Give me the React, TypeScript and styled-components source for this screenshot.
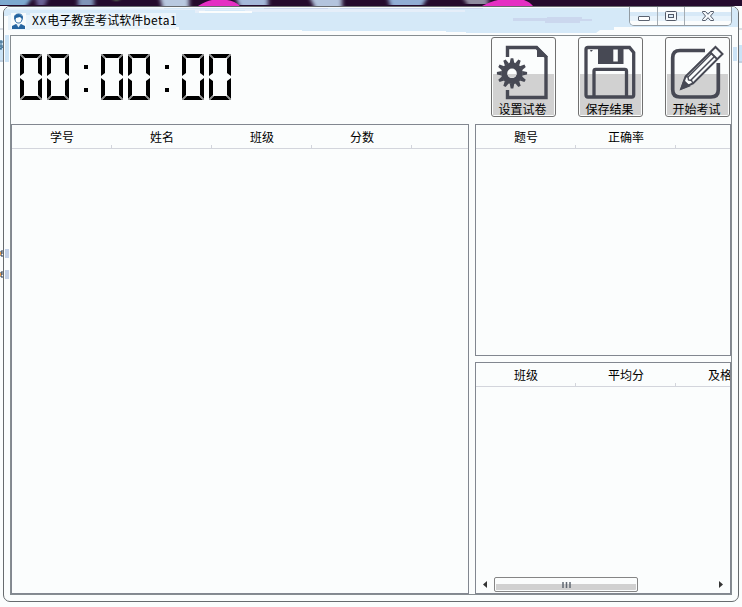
import React from 'react';
import styled, { createGlobalStyle } from 'styled-components';

const Global = createGlobalStyle`
  * { box-sizing: border-box; }
  html, body { margin: 0; background: #fbfdfd; overflow: hidden; }
  body { font: 12px/16px "Noto Sans CJK SC", sans-serif; color: #000; }
  svg { display: block; }
`;

const Desktop = styled.main`
  position: relative;
  width: 742px;
  height: 607px;
  padding: 6px 3px 5px;
  overflow: hidden;
  background: #fbfdfd;
`;

const Backdrop = styled.svg`
  position: absolute;
  inset: 0;
`;

const Window = styled.section`
  position: relative;
  width: 736px;
  height: 596px;
  border: 1px solid #676b6e;
  border-radius: 7px;
  background: #fbfdfd;
  padding: 0 6px;
  overflow: hidden;
`;

const Glass = styled.svg`
  position: absolute;
  left: 0;
  top: 0;
`;

const TitleBar = styled.header`
  position: relative;
  height: 28px;
  display: flex;
  align-items: flex-start;
`;

const UserMark = styled.svg`
  margin: 6px 6px 0 1px;
`;

const Title = styled.h1`
  margin: 5px auto 0 0;
  font: 12px/16px "Noto Sans CJK SC", sans-serif;
  white-space: nowrap;
`;

const TitleLatin = styled.span<{ $gap: number }>`
  letter-spacing: ${p => p.$gap}px;
`;

const Controls = styled.div`
  display: flex;
  width: 103px;
  height: 19px;
  border: 1px solid #929ba2;
  border-top: 0;
  border-radius: 0 0 5px 5px;
  overflow: hidden;
`;

const ControlButton = styled.button<{ $width: number }>`
  width: ${p => p.$width}px;
  height: 18px;
  padding: 0;
  border: 0;
  border-right: 1px solid #a5adb3;
  background: linear-gradient(#fbfdfd 0 5px, #d7e9f7 5px 9px, #e8f3fb 9px 14px, #fbfdfd 14px);
  &:last-child { border-right: 0; }
`;

const Client = styled.div`
  position: relative;
  width: 722px;
  height: 560px;
  border: 1px solid #868d91;
  background: #fbfdfd;
`;

const Toolbar = styled.div`
  height: 88px;
  display: flex;
  align-items: flex-start;
  justify-content: space-between;
  padding: 1px 1px 0 8px;
`;

const Clock = styled.div`
  display: flex;
  padding-top: 17px;
`;

const ClockGlyph = styled.svg<{ $before: number }>`
  margin-left: ${p => p.$before}px;
`;

const Actions = styled.div`
  display: flex;
  gap: 22px;
`;

const Action = styled.button`
  position: relative;
  width: 65px;
  height: 80px;
  border: 1px solid #707070;
  border-radius: 3px;
  padding: 0;
  font: inherit;
  color: #000;
  background: linear-gradient(#d1d1d1, #d1d1d1) 1px 36px / 61px 41px no-repeat, #fbfdfd;
`;

const ActionIcon = styled.svg`
  margin: -1px;
`;

const ActionLabel = styled.span`
  position: absolute;
  left: 0;
  right: 2px;
  bottom: -1px;
  line-height: 16px;
  text-align: center;
`;

const Panels = styled.div`
  display: flex;
  gap: 6px;
  height: 470px;
`;

const SideColumn = styled.div`
  display: flex;
  flex: none;
  flex-direction: column;
  gap: 6px;
  width: 256px;
`;

const Table = styled.section<{ $width: number; $height: number }>`
  display: flex;
  flex: none;
  flex-direction: column;
  width: ${p => p.$width}px;
  height: ${p => p.$height}px;
  border: 1px solid #828790;
  overflow: hidden;
`;

const HeaderRow = styled.div`
  display: flex;
  flex: none;
  height: 24px;
  border-bottom: 1px solid #d3d5dc;
  overflow: hidden;
`;

const HeaderCell = styled.div`
  flex: 0 0 100px;
  height: 23px;
  line-height: 24px;
  text-align: center;
  white-space: nowrap;
  background: linear-gradient(#d3d5dc, #d3d5dc) right bottom / 1px 3px no-repeat;
`;

const ScrollBar = styled.div`
  display: flex;
  align-items: center;
  justify-content: space-between;
  height: 17px;
  margin-top: auto;
  padding: 0 6px;
`;

const Thumb = styled.div`
  display: flex;
  justify-content: center;
  align-items: center;
  width: 144px;
  height: 15px;
  margin-left: 6px;
  margin-right: auto;
  border: 1px solid #858585;
  border-radius: 2px;
  background: linear-gradient(#fbfdfd 0 6px, #d1d1d1 6px);
  box-shadow: inset 1px 0 #fbfdfd, inset -1px -1px #fbfdfd;
`;

function Surroundings() {
  return (
    <Backdrop width="742" height="607" viewBox="0 0 742 607">
      <defs>
        <filter id="soft" x="-10%" y="-50%" width="120%" height="200%">
          <feGaussianBlur stdDeviation="2 .7" />
        </filter>
      </defs>
      <rect width="742" height="6" fill="#250b2d" />
      <g filter="url(#soft)">
        <path d="M-4-2h36l-5 7H-4z" fill="#7da9cf" />
        <path d="M35-2h13l-3 7H37z" fill="#6a6295" />
        <path d="M78-2h16v7H78z" fill="#8094b9" />
        <path d="M112-2h10l-6 4z" fill="#587050" />
        <path d="M160-2h29v8h-27z" fill="#b9c9e0" />
        <path d="M236-2h32v7h-29z" fill="#a5b9da" />
        <path d="M310-2h32v8h-28z" fill="#b3c4dd" />
        <path d="M388-2h39l-4 7h-33z" fill="#91aed5" />
        <path d="M463-2h25v6h-21z" fill="#918da0" />
      </g>
      <path d="M198 6q8-5 14-6h15q8 1 13 6zM482 6q10-5 16-6h26q6 2 9 6z" fill="#e52fc3" />
      <path d="M0 40h3v22H0zM739 45h3v18h-3z" fill="#cce4f7" />
      <path d="M0 29h3M0 61h3M739 29h3M739 62h3" stroke="#b7bfcc" />
      <path d="M0 42h3M1 40v10M0 46h3M0 49l3-2" stroke="#32678c" />
      <g fill="none" stroke="#203148">
        <path d="M4 251H1v5h3M1 253h3M4 272H1v5h3M1 274h3" />
      </g>
      <path d="M0 252h1v3H0zM0 273h1v3H0z" fill="#e99a43" />
    </Backdrop>
  );
}

function FrameGlass() {
  return (
    <Glass width="734" height="594" viewBox="4 7 734 594">
      <path d="M4 7h734v20H614v3h-14l-4 3H466v-1h-20v-1H302v-1H179v-3h-6v-9h-5v-2H4z" fill="#d5e9f8" />
      <path d="M10 10h185v3h10v-3h40v2h220v-2h-20v-1H10z" fill="#e5eef9" />
      <path d="M8 15h22v15H8zM4 7h160v2H4z" fill="#e8f3fb" />
      <path d="M30 13h146v16H30z" fill="#eaf4fb" />
      <path d="M199 11h53v2h-53z" fill="#fbfdfd" />
      <path d="M264 8h64v1h-64zM340 8h143v1H340zM513 18h34v-1h35v2h10v2h-12v2h-35v-2h-32z" fill="#cbd7ee" />
      <path d="M5 35h4v27H5zM733 47h4v14h-4z" fill="#cce4f7" />
      <path d="M5 249h4v9H5zM5 270h4v9H5z" fill="#c2d0e7" />
      <path d="M5 7.5h732" stroke="#f7fbfe" />
    </Glass>
  );
}

function Digit({ before }: { before: number }) {
  return (
    <ClockGlyph $before={before} width="22" height="46" viewBox="0 0 22 46">
      <path d="M1 0h20l-4 4H5zM1 46h20l-4-4H5zM0 1l4 4v14l-4 3zM22 1l-4 4v14l4 3zM0 24l4 3v14l-4 4zM22 24l-4 3v14l4 4z" />
      <path d="M0 0l4 4M22 0l-4 4M0 46l4-4M22 46l-4-4" stroke="#777" strokeWidth=".8" />
    </ClockGlyph>
  );
}

function Colon() {
  return (
    <ClockGlyph $before={15} width="4" height="46" viewBox="0 0 4 46" shapeRendering="crispEdges">
      <path d="M0 11h4v4H0zM0 34h4v4H0z" />
    </ClockGlyph>
  );
}

const ink = '#474954';

function PaperIcon() {
  return (
    <ActionIcon width="65" height="80" viewBox="0 0 65 80">
      <path d="M16.5 20V10.5h29L55 20v40.5H16.5V53" fill="none" stroke={ink} strokeWidth="3.4" />
      <path d="M46 9l11 11H46z" fill={ink} />
      {Array.from({ length: 12 }, (_, i) => (
        <path key={i} d="M18.7 26l1-4.8h2.6l1 4.8z" fill={ink} transform={`rotate(${i * 30} 21 36.3)`} />
      ))}
      <circle cx="21" cy="36.3" r="7.8" fill="#fbfdfd" stroke={ink} strokeWidth="6" />
      <path d="M16.5 37h9a4.6 4.6 0 0 1-9 0" fill="#d1d1d1" />
    </ActionIcon>
  );
}

function DiskIcon() {
  return (
    <ActionIcon width="65" height="80" viewBox="0 0 65 80">
      <path d="M10 10.5h41.5l4.2 5V58q0 2-2 2H10q-2 0-2-2V12.5q0-2 2-2z" fill="none" stroke={ink} strokeWidth="3.3" />
      <path d="M20 10h25.5v17H20z" fill={ink} />
      <path d="M35.3 12.5h4.5v12h-4.5z" fill="#fbfdfd" />
      <path d="M16 60V34q0-1.7 1.7-1.7h29q1.8 0 1.8 1.7v26" fill="none" stroke={ink} strokeWidth="3.3" />
      <path d="M12 13h3l-2 2z" fill={ink} />
    </ActionIcon>
  );
}

function PencilIcon() {
  return (
    <ActionIcon width="65" height="80" viewBox="0 0 65 80">
      <path d="M40 13.5H15q-7.3 0-7.3 7.3v32q0 7.2 7.3 7.2h31q7.3 0 7.3-7.2V26" fill="none" stroke={ink} strokeWidth="3.7" />
      <path d="M16.5 51.5l4-12L50.5 10l7 7-29.5 29.5z" fill="#fbfdfd" stroke={ink} strokeWidth="2" />
      <path d="M16 52l3-8 5 5zM45 15l7 7" fill={ink} stroke={ink} strokeWidth="1.8" />
      <path d="M23 40l24-24M26 43l24-24" stroke={ink} strokeWidth="1.5" />
      <path d="M20.5 39.5l2.5.5.5 3 3 .5 1.5 3" fill="none" stroke={ink} strokeWidth="1.4" />
    </ActionIcon>
  );
}

function Header({ labels }: { labels: string[] }) {
  return <HeaderRow>{labels.map(label => <HeaderCell key={label}>{label}</HeaderCell>)}</HeaderRow>;
}

const actions = [
  { label: '设置试卷', Icon: PaperIcon },
  { label: '保存结果', Icon: DiskIcon },
  { label: '开始考试', Icon: PencilIcon },
];

export default function App() {
  return (
    <>
      <Global />
      <Desktop>
        <Surroundings />
        <Window>
          <FrameGlass />
          <TitleBar>
            <UserMark width="15" height="16" viewBox="0 0 15 16">
              <path d="M0 0h15v16H0z" fill="#f7fbfd" />
              <path d="M1 16v-3l4-2 2.5 3 2.5-3 4 2v3z" fill="#2464a0" />
              <path d="M3.7 6C3 2 5 1 8 1c3 0 4 2 3.3 5l-1 2.5c-1 2-4.5 2-5.7 0z" fill="#fbfdfd" stroke="#2464a0" />
              <path d="M3.5 5V3Q7-1 11 3v3L9 4 5 5 4.5 7z" fill="#2464a0" />
              <path d="M5 11l2.5 4L10 11" fill="#e7f3fb" stroke="#2464a0" strokeWidth=".7" />
            </UserMark>
            <Title><TitleLatin $gap={0.7}>XX</TitleLatin>电子教室考试软件<TitleLatin $gap={0.5}>beta1</TitleLatin></Title>
            <Controls>
              <ControlButton $width={28} aria-label="Minimize">
                <svg width="27" height="18"><rect x="8.5" y="9.5" width="11" height="4" rx=".5" fill="#fff" stroke="#5b6370" /></svg>
              </ControlButton>
              <ControlButton $width={27} aria-label="Maximize">
                <svg width="26" height="18"><rect x="7.5" y="4.5" width="11" height="9" rx="1" fill="#f5f8fb" stroke="#535a68" /><rect x="10.5" y="7.5" width="5" height="3" fill="#dcecf8" stroke="#535a68" /></svg>
              </ControlButton>
              <ControlButton $width={46} aria-label="Close">
                <svg width="46" height="18"><path d="M17.5 4.5h3l2.5 2.8 2.5-2.8h3v1l-3 3.5 3 3.5v1h-3L23 10.7l-2.5 2.8h-3v-1l3-3.5-3-3.5z" fill="#f4f8fb" stroke="#535a68" /></svg>
              </ControlButton>
            </Controls>
          </TitleBar>
          <Client>
            <Toolbar>
              <Clock role="timer" aria-label="00:00:00">
                <Digit before={1} /><Digit before={5} /><Colon />
                <Digit before={13} /><Digit before={5} /><Colon />
                <Digit before={13} /><Digit before={5} />
              </Clock>
              <Actions>
                {actions.map(({ label, Icon }) => (
                  <Action key={label}><Icon /><ActionLabel>{label}</ActionLabel></Action>
                ))}
              </Actions>
            </Toolbar>
            <Panels>
              <Table $width={458} $height={470}>
                <Header labels={['学号', '姓名', '班级', '分数']} />
              </Table>
              <SideColumn>
                <Table $width={256} $height={232}>
                  <Header labels={['题号', '正确率', '']} />
                </Table>
                <Table $width={256} $height={232}>
                  <Header labels={['班级', '平均分', '及格率']} />
                  <ScrollBar>
                    <svg width="6" height="7"><path d="M5 0v7L1 3.5z" fill="#343434" /></svg>
                    <Thumb>
                      <svg width="9" height="6"><path d="M1 0v6M4.5 0v6M8 0v6" stroke="#626973" strokeWidth="1.5" /></svg>
                    </Thumb>
                    <svg width="6" height="7"><path d="M1 0v7l4-3.5z" fill="#343434" /></svg>
                  </ScrollBar>
                </Table>
              </SideColumn>
            </Panels>
          </Client>
        </Window>
      </Desktop>
    </>
  );
}
